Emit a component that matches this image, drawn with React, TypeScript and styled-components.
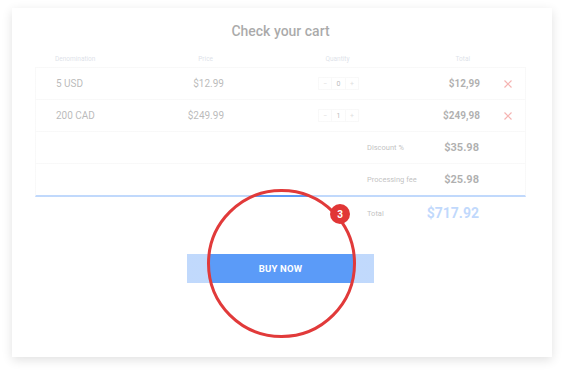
import styled, { createGlobalStyle } from "styled-components";

const GlobalStyle = createGlobalStyle`
  body {
    margin: 0;
    background: #ffffff;
    font-family: Roboto, "Liberation Sans", sans-serif;
  }
`;

const COLUMNS = "100px 98px 209px 47px 1fr";
const LINE = "#eeeeee";

const Page = styled.div`
  min-height: 374px;
  box-sizing: border-box;
  padding: 8px 12px 17px;
`;

const Card = styled.div`
  position: relative;
  box-sizing: border-box;
  width: 540px;
  height: 349px;
  padding: 14px 26px 0 23px;
  background: #ffffff;
  box-shadow: 0 3px 10px rgba(0, 0, 0, 0.12);
`;

const Title = styled.h1`
  margin: 0;
  text-align: center;
  font-size: 14px;
  line-height: 18px;
  font-weight: 500;
  color: #1e1e1e;
`;

const Table = styled.div`
  margin-top: 8px;
`;

const HeaderRow = styled.div`
  display: grid;
  grid-template-columns: ${COLUMNS};
  align-items: end;
  height: 20px;
  padding-bottom: 4px;
  box-sizing: border-box;
  border-bottom: 1px solid ${LINE};
`;

const Row = styled.div`
  display: grid;
  grid-template-columns: ${COLUMNS};
  align-items: center;
  height: 32px;
  box-sizing: border-box;
  border: 1px solid ${LINE};
  border-top: none;
`;

const Cell = styled.div<{ $align: "left" | "right" | "center"; $pad?: number }>`
  padding-left: ${(p) => (p.$align === "left" ? p.$pad ?? 0 : 0)}px;
  padding-right: ${(p) => (p.$align === "right" ? p.$pad ?? 0 : 0)}px;
  white-space: nowrap;
  display: flex;
  justify-content: ${(p) =>
    p.$align === "left" ? "flex-start" : p.$align === "right" ? "flex-end" : "center"};
`;

const HeadText = styled.span`
  font-size: 6.5px;
  line-height: 8px;
  color: #a6b0c4;
`;

const DataText = styled.span<{ $bold?: boolean }>`
  font-size: 10px;
  line-height: 12px;
  font-weight: ${(p) => (p.$bold ? 700 : 400)};
  color: ${(p) => (p.$bold ? "#303030" : "#4a4a4a")};
`;

const Stepper = styled.div`
  display: flex;
  height: 13px;
  border: 1px solid ${LINE};
  box-sizing: border-box;
`;

const StepCell = styled.span<{ $value?: boolean }>`
  width: 12.5px;
  display: flex;
  align-items: center;
  justify-content: center;
  font-size: 7px;
  color: ${(p) => (p.$value ? "#4a4a4a" : "#a8a8a8")};
  border-left: ${(p) => (p.$value ? `1px solid ${LINE}` : "none")};
  border-right: ${(p) => (p.$value ? `1px solid ${LINE}` : "none")};
`;

const Remove = styled.svg`
  width: 8px;
  height: 8px;
  stroke: #e53935;
  stroke-width: 1.2;
`;

const SummaryRow = styled.div<{ $accent?: boolean; $open?: boolean }>`
  display: flex;
  align-items: center;
  justify-content: space-between;
  height: ${(p) => (p.$accent ? 33 : 32)}px;
  box-sizing: border-box;
  padding: 0 ${(p) => (p.$open ? 47 : 46)}px 0 ${(p) => (p.$open ? 332 : 331)}px;
  border: ${(p) => (p.$open ? "none" : `1px solid ${LINE}`)};
  border-top: none;
  border-bottom: ${(p) =>
    p.$accent ? "2px solid #5b9bf8" : p.$open ? "none" : `1px solid ${LINE}`};
`;

const Label = styled.span`
  font-size: 7.5px;
  color: #5a5a5a;
`;

const Amount = styled.span<{ $big?: boolean }>`
  font-size: ${(p) => (p.$big ? 14 : 11)}px;
  font-weight: 700;
  color: ${(p) => (p.$big ? "#5b9bf8" : "#303030")};
`;

const BuyButton = styled.button`
  display: block;
  width: 187px;
  height: 29px;
  margin: 25px auto 0;
  border: none;
  background: #5b9bf8;
  color: #ffffff;
  font-family: inherit;
  font-size: 9.5px;
  font-weight: 700;
  letter-spacing: 0.2px;
`;

const Spotlight = styled.div`
  position: absolute;
  inset: 0;
  pointer-events: none;
  background: radial-gradient(
    circle at 269.5px 255.5px,
    transparent 72px,
    rgba(255, 255, 255, 0.62) 73px
  );
`;

const Ring = styled.div`
  position: absolute;
  left: 195px;
  top: 181px;
  width: 149px;
  height: 149px;
  box-sizing: border-box;
  border: 3px solid #e13a3a;
  border-radius: 50%;
  pointer-events: none;
`;

const Badge = styled.div`
  position: absolute;
  left: 318px;
  top: 196px;
  width: 20px;
  height: 20px;
  border-radius: 50%;
  background: #e13636;
  color: #ffffff;
  display: flex;
  align-items: center;
  justify-content: center;
  font-size: 10px;
  font-weight: 700;
`;

const items = [
  { name: "5 USD", price: "$12.99", qty: 0, total: "$12,99" },
  { name: "200 CAD", price: "$249.99", qty: 1, total: "$249,98" },
];

export default function App() {
  return (
    <Page>
      <GlobalStyle />
      <Card>
        <Title>Check your cart</Title>
        <Table>
          <HeaderRow>
            <Cell $align="left" $pad={20}>
              <HeadText>Denomination</HeadText>
            </Cell>
            <Cell $align="right" $pad={20}>
              <HeadText>Price</HeadText>
            </Cell>
            <Cell $align="center">
              <HeadText>Quantity</HeadText>
            </Cell>
            <Cell $align="right" $pad={19}>
              <HeadText>Total</HeadText>
            </Cell>
            <Cell $align="center" />
          </HeaderRow>
          {items.map((item) => (
            <Row key={item.name}>
              <Cell $align="left" $pad={20}>
                <DataText>{item.name}</DataText>
              </Cell>
              <Cell $align="right" $pad={10}>
                <DataText>{item.price}</DataText>
              </Cell>
              <Cell $align="center">
                <Stepper>
                  <StepCell>−</StepCell>
                  <StepCell $value>{item.qty}</StepCell>
                  <StepCell>+</StepCell>
                </Stepper>
              </Cell>
              <Cell $align="right" $pad={10}>
                <DataText $bold>{item.total}</DataText>
              </Cell>
              <Cell $align="center">
                <Remove viewBox="0 0 8 8">
                  <path d="M0.5 0.5 L7.5 7.5 M7.5 0.5 L0.5 7.5" />
                </Remove>
              </Cell>
            </Row>
          ))}
          <SummaryRow>
            <Label>Discount %</Label>
            <Amount>$35.98</Amount>
          </SummaryRow>
          <SummaryRow $accent>
            <Label>Processing fee</Label>
            <Amount>$25.98</Amount>
          </SummaryRow>
          <SummaryRow $open>
            <Label>Total</Label>
            <Amount $big>$717.92</Amount>
          </SummaryRow>
        </Table>
        <BuyButton>BUY NOW</BuyButton>
        <Spotlight />
        <Ring />
        <Badge>3</Badge>
      </Card>
    </Page>
  );
}
